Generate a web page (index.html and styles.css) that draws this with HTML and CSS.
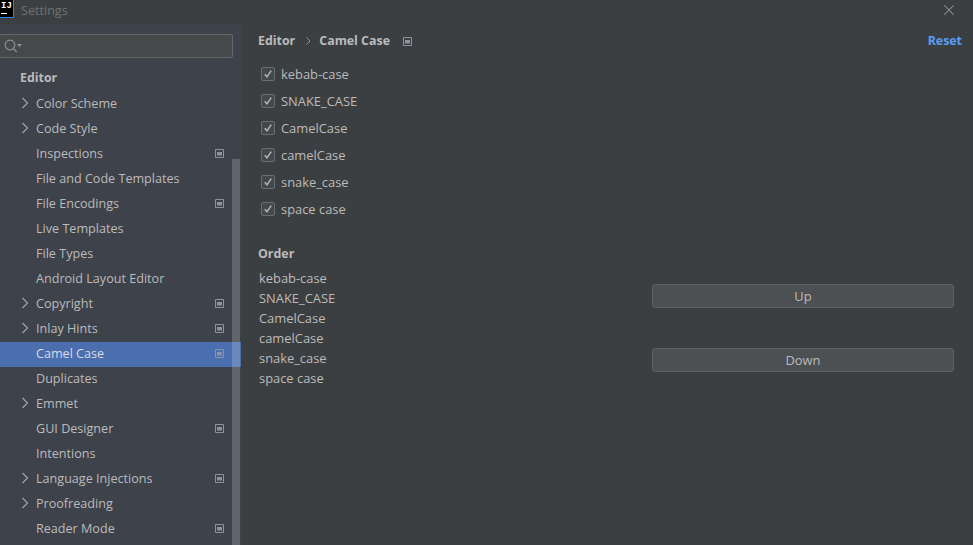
FILE: index.html
```html
<!DOCTYPE html>
<html lang="en">
<head>
<meta charset="utf-8">
<title>Settings</title>
<link rel="stylesheet" href="styles.css">
</head>
<body>
<svg class="defs" width="0" height="0" aria-hidden="true">
  <symbol id="gear" viewBox="0 0 9 9"><path d="M.5.5h8v8h-8z" fill="none" stroke="#8c959e"/><path d="M2 3h5v3.500H2z" fill="#8c959e"/></symbol>
  <symbol id="chev" viewBox="0 0 8 12"><path d="M1.500 1l5 5-5 5" fill="none" stroke="#a0a4a8" stroke-width="1.200"/></symbol>
  <symbol id="check" viewBox="0 0 14 14"><path d="M3.200 7.300l2.600 3L10.800 3" fill="none" stroke="#b5b8ba" stroke-width="1.700"/></symbol>
</svg>
<header class="titlebar">
  <div class="logo"><span class="logo-text">IJ</span><span class="logo-bar"></span></div>
  <span class="title">Settings</span>
  <svg class="close" width="10" height="10" viewBox="0 0 10 10"><path d="M.3.300l9.400 9.400M9.700.300L.3 9.700" stroke="#85888a" stroke-width="1.100"/></svg>
</header>
<div class="body">
  <aside class="sidebar">
    <div class="search">
      <svg width="22" height="16" viewBox="0 0 22 16"><circle cx="8" cy="7" r="4.800" fill="none" stroke="#8b9094" stroke-width="1.200"/><path d="M11.400 10.500l3.300 3.500" stroke="#8b9094" stroke-width="1.300"/><path d="M15 6h5l-2.500 3z" fill="#8b9094"/></svg>
    </div>
    <div class="section">Editor</div>
    <nav class="tree">
      <div class="row"><svg class="chev"><use href="#chev"/></svg><span>Color Scheme</span></div>
      <div class="row"><svg class="chev"><use href="#chev"/></svg><span>Code Style</span></div>
      <div class="row"><span>Inspections</span><svg class="gear"><use href="#gear"/></svg></div>
      <div class="row"><span>File and Code Templates</span></div>
      <div class="row"><span>File Encodings</span><svg class="gear"><use href="#gear"/></svg></div>
      <div class="row"><span>Live Templates</span></div>
      <div class="row"><span>File Types</span></div>
      <div class="row"><span>Android Layout Editor</span></div>
      <div class="row"><svg class="chev"><use href="#chev"/></svg><span>Copyright</span><svg class="gear"><use href="#gear"/></svg></div>
      <div class="row"><svg class="chev"><use href="#chev"/></svg><span>Inlay Hints</span><svg class="gear"><use href="#gear"/></svg></div>
      <div class="row selected"><span>Camel Case</span><svg class="gear"><use href="#gear"/></svg></div>
      <div class="row"><span>Duplicates</span></div>
      <div class="row"><svg class="chev"><use href="#chev"/></svg><span>Emmet</span></div>
      <div class="row"><span>GUI Designer</span><svg class="gear"><use href="#gear"/></svg></div>
      <div class="row"><span>Intentions</span></div>
      <div class="row"><svg class="chev"><use href="#chev"/></svg><span>Language Injections</span><svg class="gear"><use href="#gear"/></svg></div>
      <div class="row"><svg class="chev"><use href="#chev"/></svg><span>Proofreading</span></div>
      <div class="row"><span>Reader Mode</span><svg class="gear"><use href="#gear"/></svg></div>
    </nav>
    <div class="scrollbar"></div>
  </aside>
  <main class="content">
    <div class="crumbs">
      <b>Editor</b>
      <svg class="crumb-sep" width="5" height="8" viewBox="0 0 5 8"><path d="M.5.5L4 4 .5 7.500" fill="none" stroke="#8f9294"/></svg>
      <b>Camel Case</b>
      <svg class="crumb-gear"><use href="#gear"/></svg>
      <a class="reset">Reset</a>
    </div>
    <div class="checks">
      <div class="check"><span class="box"><svg width="14" height="14"><use href="#check"/></svg></span>kebab-case</div>
      <div class="check"><span class="box"><svg width="14" height="14"><use href="#check"/></svg></span>SNAKE_CASE</div>
      <div class="check"><span class="box"><svg width="14" height="14"><use href="#check"/></svg></span>CamelCase</div>
      <div class="check"><span class="box"><svg width="14" height="14"><use href="#check"/></svg></span>camelCase</div>
      <div class="check"><span class="box"><svg width="14" height="14"><use href="#check"/></svg></span>snake_case</div>
      <div class="check"><span class="box"><svg width="14" height="14"><use href="#check"/></svg></span>space case</div>
    </div>
    <h2 class="order-title">Order</h2>
    <div class="order">
      <ul class="order-list">
        <li>kebab-case</li>
        <li>SNAKE_CASE</li>
        <li>CamelCase</li>
        <li>camelCase</li>
        <li>snake_case</li>
        <li>space case</li>
      </ul>
      <div class="order-buttons">
        <button class="btn">Up</button>
        <button class="btn">Down</button>
      </div>
    </div>
  </main>
</div>
</body>
</html>
```
FILE: styles.css
```css
* { box-sizing: border-box; }
html, body { margin: 0; height: 100%; }
body {
  width: 973px; height: 545px; overflow: hidden;
  background: #3c3f41; color: #bbbbbb;
  font: 12.9px/20px "Open Sans", "Noto Sans", sans-serif;
  display: flex; flex-direction: column;
}
.defs { position: absolute; }
.titlebar { height: 24px; flex: none; display: flex; align-items: flex-start; }
.logo {
  width: 14px; height: 18px; background: #000; border: 1px solid #2f7fe0; border-left: 0; border-top: 0;
  display: flex; flex-direction: column; align-items: flex-start; padding-left: 1px; flex: none;
}
.logo-text { font: bold 9px/10px "Liberation Mono", monospace; color: #fff; margin-top: 1px; }
.logo-bar { width: 6px; height: 1px; background: #fff; margin-top: 2px; }
.title { margin-left: 7px; color: #6e7173; font-size: 12.6px; line-height: 22px; }
.close { margin-left: auto; margin-right: 19px; margin-top: 5px; }
.body { flex: 1; display: flex; min-height: 0; }
.sidebar { width: 241px; flex: none; background: #3e424b; position: relative; overflow: hidden; padding-top: 10px; font-size: 12.6px; }
.search {
  width: 234px; height: 24px; margin-left: -1px; background: #45494a;
  border: 1px solid #646769; border-radius: 2px; display: flex; align-items: center; padding-left: 2px;
}
.section { font-weight: 700; height: 34px; padding: 10px 0 0 20px; font-size: 12.4px; }
.tree { display: flex; flex-direction: column; }
.row { height: 25px; flex: none; display: flex; align-items: center; padding: 0 17px 2px 36px; position: relative; white-space: nowrap; }
.row.selected { background: #4b6eaf; color: #d8dde6; }
.chev { position: absolute; left: 21px; top: 5px; width: 8px; height: 12px; }
.gear { width: 9px; height: 9px; margin-left: auto; }
.scrollbar { position: absolute; left: 232px; top: 135px; bottom: 0; width: 8px; background: rgba(255,255,255,.18); }
.content { flex: 1; min-width: 0; padding: 6px 19px 0 17px; }
.crumbs { display: flex; align-items: center; height: 22px; margin-right: -8px; font-size: 12.4px; }
.crumbs b { font-weight: 700; }
.crumb-sep { margin: 0 8px 0 11px; }
.crumb-gear { width: 9px; height: 9px; margin-left: 13px; }
.reset { margin-left: auto; font-weight: 700; color: #589df6; }
.checks { margin-top: 8px; display: flex; flex-direction: column; }
.check { height: 27px; display: flex; align-items: center; padding-left: 3px; }
.box {
  width: 14px; height: 14px; margin-right: 6px; background: #43494a;
  border: 1px solid #6b6e70; border-radius: 2px; display: flex; align-items: center; justify-content: center;
}
.order-title { margin: 22px 0 0; font-size: 12.4px; line-height: 20px; font-weight: 700; }
.order { display: flex; justify-content: space-between; margin-top: 4px; }
.order-list { list-style: none; margin: 0; padding: 0 0 0 1px; }
.order-list li { height: 20px; }
.order-buttons { width: 302px; display: flex; flex-direction: column; gap: 40px; padding-top: 16px; }
.btn {
  height: 24px; padding: 0; background: #4c5052; color: #bbbbbb; font: inherit;
  border: 1px solid #5e6163; border-radius: 3px;
}
```
